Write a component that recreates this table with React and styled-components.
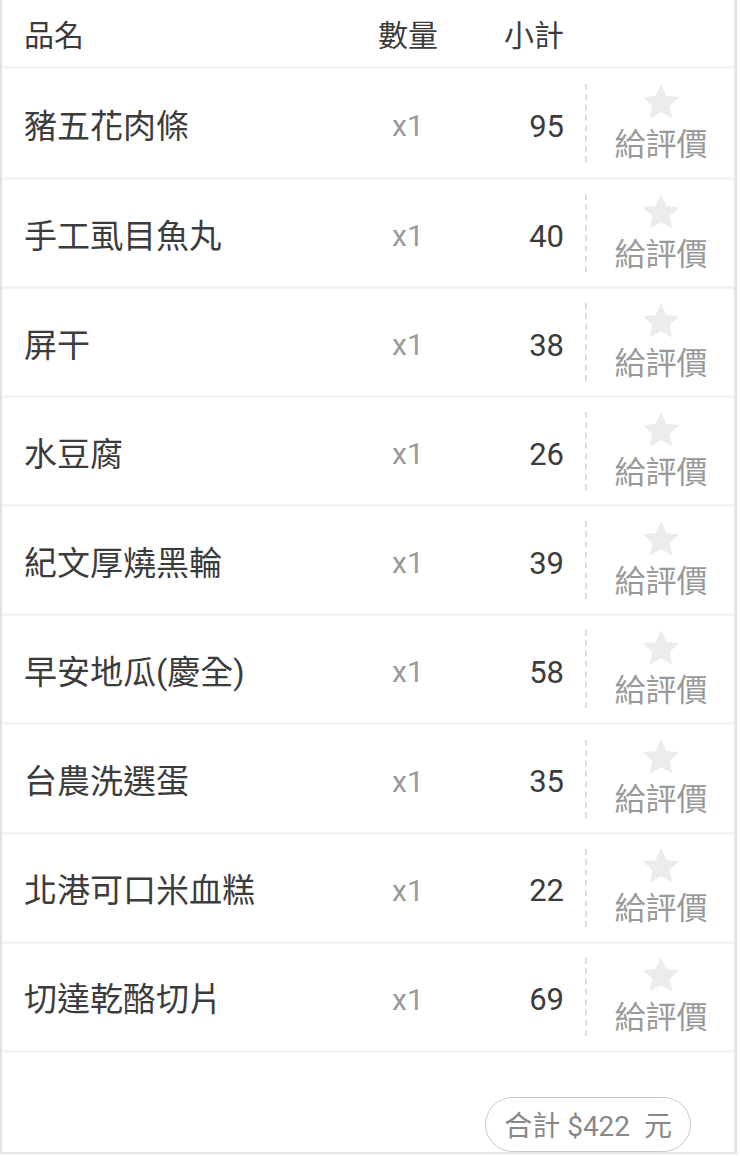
import React from "react";
import styled, { createGlobalStyle } from "styled-components";

const GlobalStyle = createGlobalStyle`
  html, body {
    margin: 0;
    padding: 0;
    background: #ffffff;
  }
  body {
    font-family: Roboto, "Noto Sans CJK TC", "Noto Sans", sans-serif;
    color: #3c3c3c;
  }
`;

const items = [
  { name: "豬五花肉條", qty: 1, sub: 95 },
  { name: "手工虱目魚丸", qty: 1, sub: 40 },
  { name: "屏干", qty: 1, sub: 38 },
  { name: "水豆腐", qty: 1, sub: 26 },
  { name: "紀文厚燒黑輪", qty: 1, sub: 39 },
  { name: "早安地瓜(慶全)", qty: 1, sub: 58 },
  { name: "台農洗選蛋", qty: 1, sub: 35 },
  { name: "北港可口米血糕", qty: 1, sub: 22 },
  { name: "切達乾酪切片", qty: 1, sub: 69 },
];

function Star() {
  return (
    <svg width="40" height="38" viewBox="0 0 24 23">
      <path
        d="M12 0.8l3.3 7 7.6 0.9-5.6 5.2 1.5 7.6L12 17.7l-6.8 3.8 1.5-7.6L1.1 8.7l7.6-0.9z"
        fill="#ececec"
      />
    </svg>
  );
}

function App() {
  const total = items.reduce((s, i) => s + i.sub * i.qty, 0);
  return (
    <>
      <GlobalStyle />
      <Panel>
        <HeaderRow>
          <HeadCell>品名</HeadCell>
          <HeadCell $align="center">數量</HeadCell>
          <HeadCell $align="right">小計</HeadCell>
          <span />
          <span />
        </HeaderRow>
        {items.map((item, i) => (
          <ItemRow key={item.name} $first={i === 0}>
            <Name>{item.name}</Name>
            <Qty>x{item.qty}</Qty>
            <Sub>{item.sub}</Sub>
            <DividerCell>
              <Dashed />
            </DividerCell>
            <Rate>
              <Star />
              <RateLabel>給評價</RateLabel>
            </Rate>
          </ItemRow>
        ))}
        <Footer>
          <TotalPill>
            合計 ${total}&nbsp;&nbsp;元
          </TotalPill>
        </Footer>
      </Panel>
    </>
  );
}

const Panel = styled.div`
  width: 737px;
  box-sizing: border-box;
  border-left: 2px solid #e2e2e2;
  border-right: 3px solid #e6e6e6;
  border-bottom: 2px solid #e6e6e6;
  background: #fff;
`;

const grid = `
  display: grid;
  grid-template-columns: 1fr 100px 106px 44px 106px;
  padding: 0 20px 0 22px;
  align-items: center;
`;

const HeaderRow = styled.div`
  ${grid}
  height: 66px;
  border-bottom: 3px solid #f3f3f3;
`;

const HeadCell = styled.div`
  font-size: 30px;
  color: #3c3c3c;
  text-align: ${(p) => p.$align || "left"};
  line-height: 1;
  padding-top: 6px;
`;

const ItemRow = styled.div`
  ${grid}
  height: ${(p) => (p.$first ? "108px" : "106.1px")};
  border-bottom: 3px solid #f3f3f3;
`;

const Name = styled.div`
  font-size: 33px;
  color: #3c3c3c;
  line-height: 1;
  white-space: nowrap;
  padding-top: 6px;
`;

const Qty = styled.div`
  font-size: 30px;
  color: #9a9a9a;
  text-align: center;
  line-height: 1;
  padding-top: 6px;
`;

const Sub = styled.div`
  font-size: 31px;
  color: #3c3c3c;
  text-align: right;
  line-height: 1;
  padding-top: 6px;
`;

const DividerCell = styled.div`
  display: flex;
  justify-content: center;
  align-items: center;
  height: 100%;
`;

const Dashed = styled.div`
  width: 0;
  height: 78px;
  border-left: 2px dashed #dddddd;
`;

const Rate = styled.div`
  display: flex;
  flex-direction: column;
  align-items: center;
  margin-top: -4px;
`;

const RateLabel = styled.div`
  font-size: 31px;
  color: #999;
  line-height: 1;
  margin-top: 8px;
  white-space: nowrap;
`;

const Footer = styled.div`
  height: 99px;
  display: flex;
  justify-content: flex-end;
  align-items: flex-end;
  padding-right: 43px;
`;

const TotalPill = styled.div`
  height: 55px;
  box-sizing: border-box;
  padding: 0 18px;
  border: 1.5px solid #c8c8c8;
  border-radius: 28px;
  display: flex;
  align-items: center;
  font-size: 28px;
  color: #888;
  white-space: nowrap;
`;

export default App;
